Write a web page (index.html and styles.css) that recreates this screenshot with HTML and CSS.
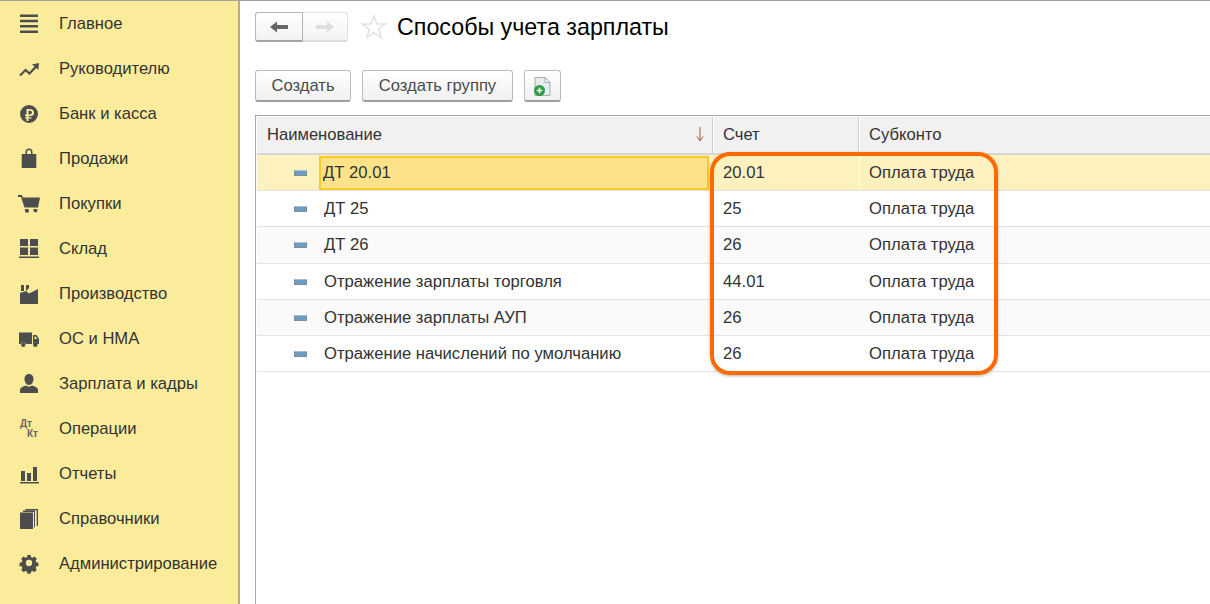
FILE: index.html
```html
<!DOCTYPE html>
<html lang="ru">
<head>
<meta charset="utf-8">
<title>Способы учета зарплаты</title>
<link rel="stylesheet" href="styles.css">
</head>
<body>
<div class="app">
  <nav class="sidebar">
    <a class="nav-item"><svg class="nav-icon" viewBox="0 0 24 24"><path d="M3 2.500h18v2.400H3zM3 7.800h18v2.400H3zM3 13.100h18v2.400H3zM3 18.500h18v2.400H3z"/></svg><span class="nav-label">Главное</span></a>
    <a class="nav-item"><svg class="nav-icon" viewBox="0 0 24 24"><path d="M2 18l6.500-6.500 4 3.500 5-5.500-2.500-2 7-1.500-.7 7-2-2-6.800 7-4-3.500-4.500 4.500z"/></svg><span class="nav-label">Руководителю</span></a>
    <a class="nav-item"><svg class="nav-icon" viewBox="0 0 24 24"><path fill-rule="evenodd" d="M12 3a9 9 0 1 1 0 18 9 9 0 0 1 0-18zM9.500 7v5.500H8V14h1.500v1.200H8v1.400h1.500V19h2v-2.400h3v-1.400h-3V14h2q3.500 0 3.500-3.500T13 7zm2 1.700h1.700q1.800 0 1.800 1.800t-1.800 1.900h-1.700z"/></svg><span class="nav-label">Банк и касса</span></a>
    <a class="nav-item"><svg class="nav-icon" viewBox="0 0 24 24"><path fill-rule="evenodd" d="M4.700 7H8.500V5a3.500 3.500 0 0 1 7 0V7h3.800v14H4.700zM10 7h4V5a2 2 0 0 0-4 0z"/></svg><span class="nav-label">Продажи</span></a>
    <a class="nav-item"><svg class="nav-icon" viewBox="0 0 24 24"><path d="M1 3h4l.8 2.500H23l-2 10H7.500L4 5H1zM8 17h3a2 2 0 1 1-3 1.500zM16.500 17h3.500a2 2 0 1 1-3.500 1.500z"/></svg><span class="nav-label">Покупки</span></a>
    <a class="nav-item"><svg class="nav-icon" viewBox="0 0 24 24"><path d="M3 2h8v7H3zM13 2h8v7h-8zM3 10.500h8V18H3zM13 10.500h8V18h-8zM2 19.500h20V21H2z"/></svg><span class="nav-label">Склад</span></a>
    <a class="nav-item"><svg class="nav-icon" viewBox="0 0 24 24"><path d="M4 3h3v6H4zM9 3h3v3l-3 3zM3 11l6-2 3 2.500L21 7v15H3z"/></svg><span class="nav-label">Производство</span></a>
    <a class="nav-item"><svg class="nav-icon" viewBox="0 0 24 24"><path fill-rule="evenodd" d="M2 5.500h13V17H9a3 3 0 0 0-5.500 0H2zM16 8h3.500l2.500 4v5h-1a3 3 0 0 0-5 0zM17.500 9.500V12h2.700l-1.500-2.500zM6.300 15.500a2.200 2.200 0 1 1 0 4.400 2.200 2.200 0 0 1 0-4.400zM18.300 15.500a2.200 2.200 0 1 1 0 4.400 2.200 2.200 0 0 1 0-4.400z"/></svg><span class="nav-label">ОС и НМА</span></a>
    <a class="nav-item"><svg class="nav-icon" viewBox="0 0 24 24"><path d="M12 2c3 0 4.500 2.300 4.500 5s-1.500 6-4.500 6-4.500-3.300-4.500-6 1.500-5 4.500-5zM9 13.500c1.800 1.500 4.200 1.500 6 0 3 1 6 2 6 4.500V21H3v-3c0-2.500 3-3.500 6-4.500z"/></svg><span class="nav-label">Зарплата и кадры</span></a>
    <a class="nav-item"><span class="dtkt"><span class="dt">Дт</span><span class="kt">Кт</span></span><span class="nav-label">Операции</span></a>
    <a class="nav-item"><svg class="nav-icon" viewBox="0 0 24 24"><path d="M4 9h4v10H4zM10 11h4v8h-4zM16 5h4v14h-4zM3 20h19v1.500H3z"/></svg><span class="nav-label">Отчеты</span></a>
    <a class="nav-item"><svg class="nav-icon" viewBox="0 0 24 24"><path d="M3 5.500h13V22H3zM17 5h1v15.500h-1zM6 3.500h12V5H6zM8.500 2h12.500v17h-1.300V3.200H8.500z"/></svg><span class="nav-label">Справочники</span></a>
    <a class="nav-item"><svg class="nav-icon" viewBox="0 0 24 24"><path fill-rule="evenodd" d="M10.200 3h3.600l.5 2.500 1.700.7 2.100-1.400 2.600 2.600-1.400 2.100.7 1.700 2.500.5v3.600l-2.500.5-.7 1.700 1.400 2.100-2.600 2.600-2.100-1.400-1.700.7-.5 2.500h-3.600l-.5-2.500-1.700-.7-2.100 1.400-2.600-2.600 1.400-2.100-.7-1.700-2.500-.5v-3.600l2.500-.5.7-1.700-1.400-2.100 2.600-2.600 2.100 1.400 1.700-.7zM12 8.500a3.500 3.500 0 1 0 0 7 3.500 3.500 0 0 0 0-7z" transform="translate(1.200 .2) scale(.9)"/></svg><span class="nav-label">Администрирование</span></a>
  </nav>
  <main class="content">
    <header class="titlebar">
      <div class="history">
        <button class="hist-btn hist-back"><svg width="18" height="12" viewBox="0 0 18 12"><path d="M0 6l7-5.500V4h11v4H7v3.500z"/></svg></button>
        <button class="hist-btn hist-next"><svg width="18" height="12" viewBox="0 0 18 12"><path d="M18 6l-7-5.500V4H0v4h11v3.500z"/></svg></button>
      </div>
      <svg class="star" width="26" height="26" viewBox="0 0 26 26"><path d="M13 2l3 8h8.500l-6.800 5.200 2.500 8.300L13 18.600l-7.200 4.900 2.500-8.300L1.500 10H10z"/></svg>
      <h1 class="title">Способы учета зарплаты</h1>
    </header>
    <div class="toolbar">
      <button class="tool-btn btn-create">Создать</button>
      <button class="tool-btn btn-group">Создать группу</button>
      <button class="tool-btn btn-icon"><svg width="22" height="24" viewBox="0 0 22 24"><path d="M3 3.500h10l5 5v13H3z" fill="#e6ebee" stroke="#a3aeb5"/><path d="M13 3.500v5h5z" fill="#fff" stroke="#a3aeb5"/><circle cx="7.500" cy="16.500" r="5.500" fill="#2f9e41"/><path d="M4.700 15.700h2v-2h1.600v2h2v1.600h-2v2H6.700v-2h-2z" fill="#fff"/></svg></button>
    </div>
    <div class="table-wrap">
      <div class="thead">
        <div class="th th-name">Наименование<svg class="sort" width="8" height="16" viewBox="0 0 8 16"><path d="M4 1v13M1 10.500L4 15l3-4.500" fill="none" stroke="#a0603a" stroke-width="1"/></svg></div>
        <div class="th th-acc">Счет</div>
        <div class="th th-sub">Субконто</div>
      </div>
      <div class="row row-active"><div class="cell cell-mark"><i class="dash"></i></div><div class="cell cell-name"><span class="focus">ДТ 20.01</span></div><div class="cell cell-acc">20.01</div><div class="cell cell-sub">Оплата труда</div></div>
      <div class="row"><div class="cell cell-mark"><i class="dash"></i></div><div class="cell cell-name">ДТ 25</div><div class="cell cell-acc">25</div><div class="cell cell-sub">Оплата труда</div></div>
      <div class="row row-alt"><div class="cell cell-mark"><i class="dash"></i></div><div class="cell cell-name">ДТ 26</div><div class="cell cell-acc">26</div><div class="cell cell-sub">Оплата труда</div></div>
      <div class="row"><div class="cell cell-mark"><i class="dash"></i></div><div class="cell cell-name">Отражение зарплаты торговля</div><div class="cell cell-acc">44.01</div><div class="cell cell-sub">Оплата труда</div></div>
      <div class="row row-alt"><div class="cell cell-mark"><i class="dash"></i></div><div class="cell cell-name">Отражение зарплаты АУП</div><div class="cell cell-acc">26</div><div class="cell cell-sub">Оплата труда</div></div>
      <div class="row"><div class="cell cell-mark"><i class="dash"></i></div><div class="cell cell-name">Отражение начислений по умолчанию</div><div class="cell cell-acc">26</div><div class="cell cell-sub">Оплата труда</div></div>
      <div class="highlight"></div>
    </div>
  </main>
</div>
</body>
</html>
```
FILE: styles.css
```css
* { box-sizing: border-box; }
html, body { margin: 0; height: 100%; overflow: hidden; }
body { font-family: "Liberation Sans", Arial, sans-serif; color: #333; background: #fff; }
.app { display: flex; height: 604px; border-top: 1px solid #a3a3a3; }
.sidebar { width: 240px; flex: none; background: #fbec9b; border-right: 2px solid #b5ad80; display: flex; flex-direction: column; }
.nav-item { height: 45px; display: flex; align-items: center; padding-left: 17px; font-size: 16.600px; color: #333; flex: none; }
.nav-label { margin-left: 18px; }
.nav-icon { width: 24px; height: 24px; fill: #4d4d4d; flex: none; }
.dtkt { width: 24px; height: 24px; position: relative; flex: none; font-size: 10px; font-weight: 700; color: #666; }
.dt { position: absolute; left: 3px; top: 1px; }
.kt { position: absolute; left: 10px; top: 11px; }
.content { flex: 1; min-width: 0; padding: 10px 0 0 15px; display: flex; flex-direction: column; }
.titlebar { display: flex; align-items: center; height: 32px; }
.history { display: flex; width: 93px; height: 30px; }
.hist-btn { height: 30px; padding: 0; display: flex; align-items: center; justify-content: center; background: linear-gradient(#fff, #f3f3f3); }
.hist-back { width: 48px; border: 1px solid #b5b5b5; border-bottom: 2px solid #a5a5a5; border-radius: 3px 0 0 3px; fill: #666; }
.hist-next { width: 45px; border: 1px solid #e3e3e3; border-left: 0; border-bottom: 2px solid #dcdcdc; border-radius: 0 3px 3px 0; fill: #dedede; }
.star { margin-left: 13px; fill: #fff; stroke: #e2e2e2; stroke-width: 1.500; flex: none; }
.title { margin: 0 0 0 10px; font-size: 23.250px; font-weight: 400; color: #000; }
.toolbar { display: flex; gap: 11px; margin-top: 27px; height: 33px; }
.tool-btn { height: 32px; padding: 0; font: 16.600px "Liberation Sans", Arial, sans-serif; color: #4a4a4a; background: linear-gradient(#fff, #f1f1f1); border: 1px solid #bdbdbd; border-bottom: 2px solid #9f9f9f; border-radius: 3px; }
.btn-create { width: 96px; }
.btn-group { width: 151px; }
.btn-icon { width: 37px; display: flex; align-items: center; justify-content: center; }
.table-wrap { position: relative; margin-top: 12px; flex: 1; border: 1px solid #a8a8a8; border-right: 0; border-bottom: 0; }
.thead { display: grid; grid-template-columns: 456px 146px 1fr; height: 39px; background: #f1f1f1; border-bottom: 2px solid #d5d5d5; border-top: 1px solid #fff; margin-left: 1px; }
.th { display: flex; align-items: center; padding-left: 10px; font-size: 16.600px; color: #333; border-right: 1px solid #cfcfcf; box-shadow: 1px 0 0 #fff; position: relative; }
.th-sub { border-right: 0; box-shadow: none; }
.sort { position: absolute; right: 8.500px; top: 9px; }
.row { display: grid; grid-template-columns: 64px 392px 146px 1fr; height: 36.200px; border-bottom: 1px solid #e3e3e3; font-size: 16.650px; margin-left: 1px; padding-top: 1px; }
.row-alt { background: #fafafa; }
.row-active { background: #fdf1bf; padding-top: 0; }
.cell { display: flex; align-items: center; white-space: nowrap; min-width: 0; }
.cell-mark { padding-left: 37px; }
.dash { display: block; width: 13px; height: 6px; background: #6f9cc0; border: 1px solid #7d8d99; border-top-color: #a8c0d4; }
.cell-name { padding-left: 3px; }
.cell-acc { padding-left: 10px; }
.cell-sub { padding-left: 10px; }
.row-active .cell-sub { border-left: 1px solid #fff; padding-left: 9px; }
.row-active .cell-name { padding-left: 0; margin-right: 4px; margin-left: -2px; }
.focus { display: flex; align-items: center; width: 100%; height: 34px; padding: 1px 0 0 2px; background: #fde28a; border: 2px solid #fbc926; }
.highlight { position: absolute; left: 454px; top: 36px; width: 288px; height: 223px; border: 4px solid #ff6a00; border-radius: 20px; box-shadow: 0 1px 3px rgba(0,0,0,.3); pointer-events: none; }
```
